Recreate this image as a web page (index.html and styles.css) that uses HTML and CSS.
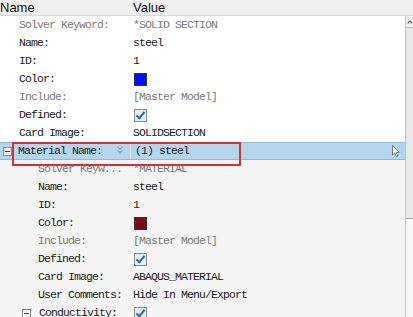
FILE: index.html
```html
<!DOCTYPE html>
<html lang="en">
<head>
    <meta charset="UTF-8">
    <title>Properties</title>
    <link rel="stylesheet" href="styles.css">
</head>
<body>
    <div class="grid">
        <!-- column titles -->
        <div class="head">
            <div class="head-name">Name</div>
            <div class="head-value">Value</div>
        </div>

        <div class="body">
            <div class="rows">
                <div class="row">
                    <div class="key dim">Solver Keyword:</div>
                    <div class="val dim">*SOLID SECTION</div>
                </div>
                <div class="row">
                    <div class="key">Name:</div>
                    <div class="val">steel</div>
                </div>
                <div class="row">
                    <div class="key">ID:</div>
                    <div class="val">1</div>
                </div>
                <div class="row">
                    <div class="key">Color:</div>
                    <div class="val"><span class="swatch blue"></span></div>
                </div>
                <div class="row">
                    <div class="key dim">Include:</div>
                    <div class="val dim">[Master Model]</div>
                </div>
                <div class="row">
                    <div class="key">Defined:</div>
                    <div class="val"><span class="check"></span></div>
                </div>
                <div class="row">
                    <div class="key">Card Image:</div>
                    <div class="val">SOLIDSECTION</div>
                </div>

                <div class="row selected">
                    <div class="key group"><span class="minus"></span>Material Name:<span class="more"></span></div>
                    <div class="val">(1) steel</div>
                </div>

                <div class="row sub">
                    <div class="key dim">Solver Keyw...</div>
                    <div class="val dim">*MATERIAL</div>
                </div>
                <div class="row sub">
                    <div class="key">Name:</div>
                    <div class="val">steel</div>
                </div>
                <div class="row sub">
                    <div class="key">ID:</div>
                    <div class="val">1</div>
                </div>
                <div class="row sub">
                    <div class="key">Color:</div>
                    <div class="val"><span class="swatch red"></span></div>
                </div>
                <div class="row sub">
                    <div class="key dim">Include:</div>
                    <div class="val dim">[Master Model]</div>
                </div>
                <div class="row sub">
                    <div class="key">Defined:</div>
                    <div class="val"><span class="check"></span></div>
                </div>
                <div class="row sub">
                    <div class="key">Card Image:</div>
                    <div class="val">ABAQUS_MATERIAL</div>
                </div>
                <div class="row sub">
                    <div class="key">User Comments:</div>
                    <div class="val">Hide In Menu/Export</div>
                </div>
                <div class="row sub">
                    <div class="key group-sub"><span class="minus"></span>Conductivity:</div>
                    <div class="val"><span class="check"></span></div>
                </div>
            </div>

            <div class="scroll">
                <div class="scroll-up">
                    <svg width="9" height="6" viewBox="0 0 9 6"><path d="M1 5 L4.5 1.5 L8 5" fill="none" stroke="#555" stroke-width="1.6"/></svg>
                </div>
                <div class="thumb"></div>
            </div>
        </div>

        <!-- annotation box and mouse pointer lie over the grid -->
        <div class="mark"></div>
        <svg class="pointer" width="8" height="13" viewBox="0 0 8 13">
            <path d="M0.5 0.5 L0.5 10 L2.8 7.8 L4.4 11.8 L5.8 11.2 L4.3 7.4 L7.4 7.4 Z" fill="#fff" stroke="#6a7c8c" stroke-width="1"/>
        </svg>
    </div>
</body>
</html>
```

FILE: styles.css
```css
body {
    margin: 0;
    padding: 0;
    background-color: #f5f5f5;
}

.grid {
    position: relative;
    width: 413px;
    height: 317px;
    overflow: hidden;
    font-family: 'Liberation Mono', monospace;
    font-size: 11.5px;
    letter-spacing: -0.9px;
    color: #1c1c1c;
}

.head {
    display: flex;
    height: 15px;
    background-color: #f0f0f0;
    border-bottom: 1px solid #d8d8d8;
    font-family: 'Liberation Sans', sans-serif;
    font-size: 13px;
    letter-spacing: 0;
    line-height: 15px;
    color: #111;
}

.head-name {
    width: 133px;
}

.body {
    display: flex;
}

.rows {
    width: 405px;
}

.row {
    display: grid;
    grid-template-columns: 131px 1fr;
    height: 18px;
    line-height: 18px;
    background-color: #fff;
    white-space: nowrap;
}

.row.sub {
    background-color: #f5f5f5;
}

.key {
    padding-left: 19px;
    display: flex;
    align-items: center;
}

.sub .key {
    padding-left: 38px;
}

.val {
    padding-left: 2px;
    display: flex;
    align-items: center;
}

.dim {
    color: #7c7c7c;
}

/* selected group row */
.row.selected {
    background-color: #b4d6ec;
    border-top: 1px solid #93b9d8;
    border-bottom: 1px solid #93b9d8;
    height: 16px;
    line-height: 16px;
}

.row.selected .key {
    padding-left: 3px;
    position: relative;
    border-right: 1px solid #dbe9f4;
}

.row.selected .val {
    padding-left: 4px;
}

.minus {
    width: 7px;
    height: 7px;
    border: 1px solid #8a8a8a;
    background-color: #fafafa;
    margin-right: 6px;
    position: relative;
    flex: none;
}

.minus::after {
    content: "";
    position: absolute;
    left: 1px;
    top: 3px;
    width: 5px;
    height: 1px;
    background-color: #444;
}

.sub .key.group-sub {
    padding-left: 22px;
}

.group-sub .minus {
    margin-right: 8px;
}

.more {
    position: absolute;
    left: 118px;
    top: 5px;
    width: 4px;
    height: 3px;
    border-bottom: 1px solid #8aa0b4;
}

.more::before,
.more::after {
    content: "";
    position: absolute;
    left: 0;
    width: 3px;
    height: 3px;
    border-right: 1px solid #8aa0b4;
    border-bottom: 1px solid #8aa0b4;
    transform: rotate(45deg);
}

.more::before {
    top: -3px;
}

.more::after {
    top: 1px;
}

.swatch {
    width: 11px;
    height: 11px;
    margin-left: 1px;
    border: 1px solid #333;
}

.swatch.blue {
    background-color: #0010ff;
}

.swatch.red {
    background-color: #7e0a14;
}

.check {
    width: 11px;
    height: 11px;
    margin-left: 1px;
    border: 1px solid #8c8c8c;
    background-color: #e4ecf4;
    position: relative;
}

.check::after {
    content: "";
    position: absolute;
    left: 3px;
    top: 0px;
    width: 3px;
    height: 7px;
    border-right: 2px solid #2a6aa8;
    border-bottom: 2px solid #2a6aa8;
    transform: rotate(40deg);
}

/* scrollbar */
.scroll {
    width: 7px;
    border-left: 1px solid #c4c4c4;
    background-color: #f8f8f8;
    height: 301px;
}

.scroll-up {
    height: 11px;
    display: flex;
    align-items: center;
    padding-left: 1px;
    background-color: #f0f0f0;
}

.thumb {
    height: 190px;
    background-color: #e8e8e8;
    border-top: 1px solid #bdbdbd;
    border-bottom: 1px solid #a8a8a8;
}

/* overlays */
.mark {
    position: absolute;
    left: 12px;
    top: 142px;
    width: 225px;
    height: 20px;
    border: 2px solid #d4303c;
}

.pointer {
    position: absolute;
    left: 392px;
    top: 145px;
}
```
